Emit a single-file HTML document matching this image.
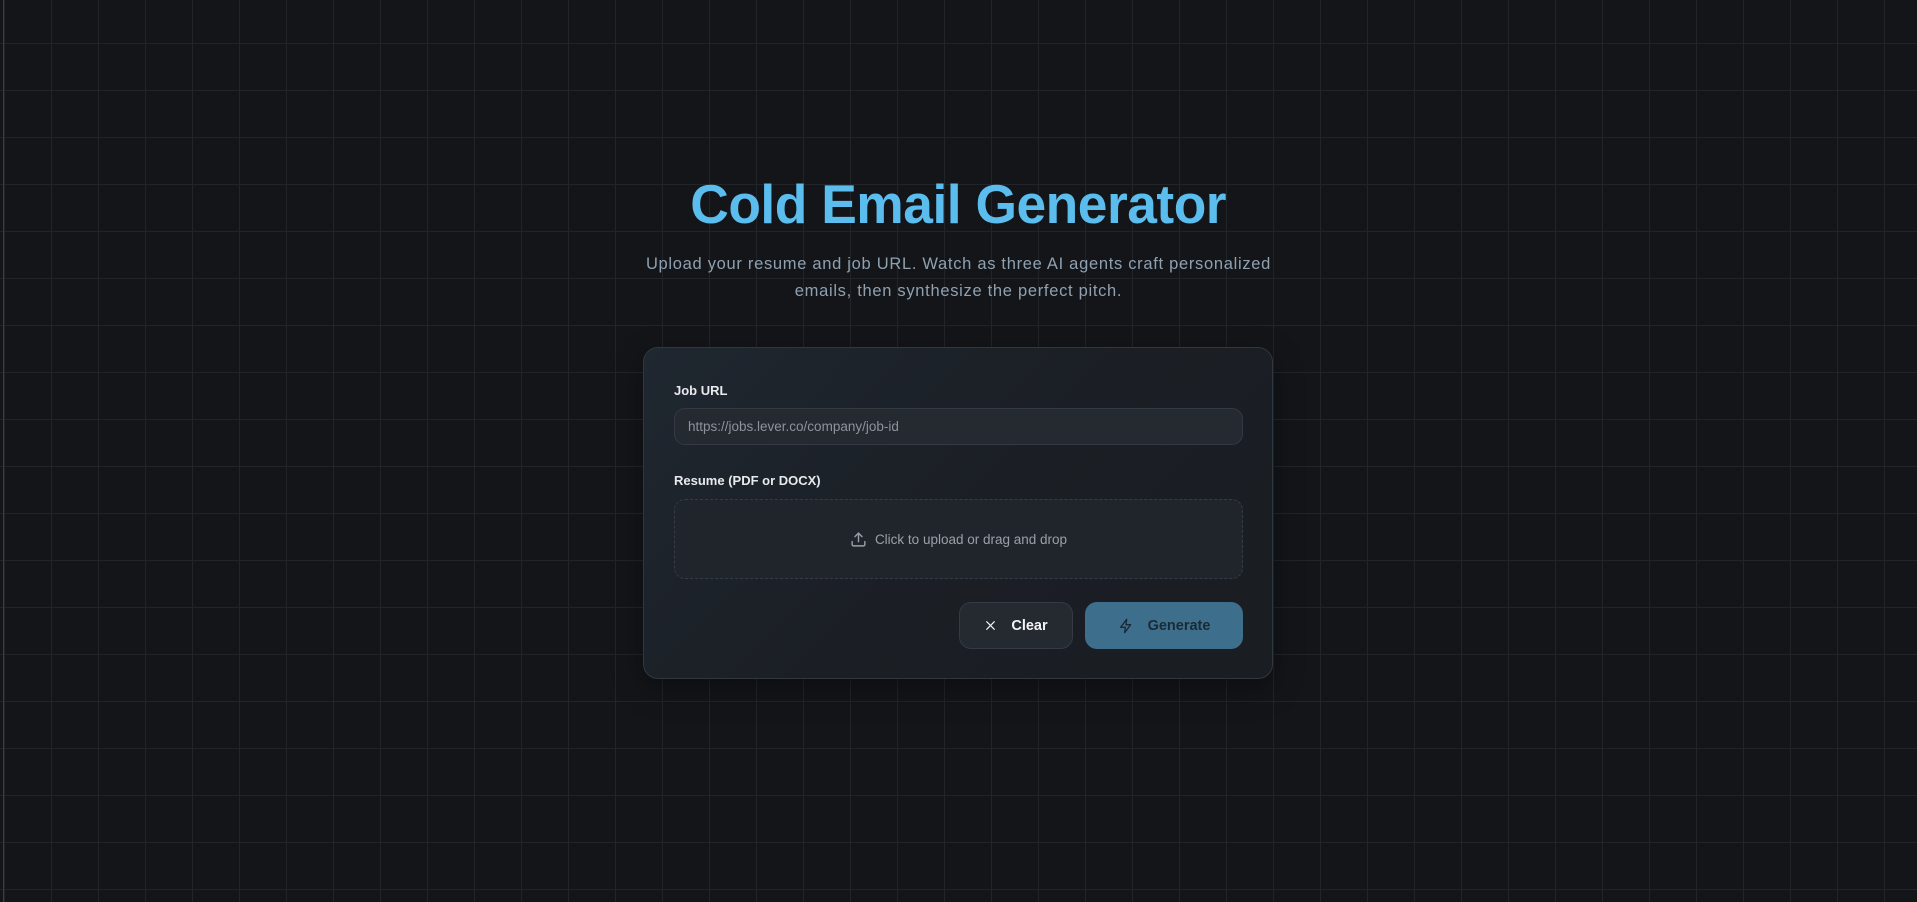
<!DOCTYPE html>
<html><head><meta charset="utf-8"><style>
*{box-sizing:border-box;margin:0;padding:0}
html,body{width:1917px;height:902px;overflow:hidden}
body{background-color:#131519;font-family:"Liberation Sans",sans-serif;position:relative;
background-image:linear-gradient(to right,#212429 1px,transparent 1px),linear-gradient(to bottom,#212429 1px,transparent 1px);
background-size:47px 47px;background-position:4px 43px}
.lb{position:absolute;left:3px;top:0;width:1px;height:902px;background:#3a3d42}
h1{position:absolute;left:0;width:1917px;top:172px;text-align:center;font-size:55px;line-height:64px;font-weight:bold;color:#5bbdee}
h1 span{display:inline-block;transform:scaleX(0.97);letter-spacing:-0.5px}
.sub{position:absolute;left:636px;width:645px;top:251px;text-align:center;font-size:16.5px;line-height:27px;color:#8fa1b1;letter-spacing:0.7px}
.card{position:absolute;left:643px;top:347px;width:630px;height:332px;border-radius:15px;border:1px solid #30373f;
background:linear-gradient(135deg,#1f2730 0%,#1b1f25 50%,#1a1d22 100%);box-shadow:0 10px 30px rgba(0,0,0,.35)}
.lab{position:absolute;left:30px;font-size:13px;font-weight:bold;color:#e8eaed}
.inp{position:absolute;left:30px;top:60px;width:569px;height:37px;border-radius:11px;background:#252a31;border:1px solid #333a43;
font-size:13.5px;color:#8d939b;padding-left:13px;line-height:35px}
.drop{position:absolute;left:30px;top:151px;width:569px;height:80px;border-radius:11px;background:#20252b;border:1px dashed #353c45;
display:flex;align-items:center;justify-content:center;font-size:13.5px;color:#9aa0a8}
.drop svg{margin-right:8px}
.btn{position:absolute;top:254px;height:47px;border-radius:12px;display:flex;align-items:center;justify-content:center;font-size:14.5px;font-weight:bold}
.clear{left:315px;width:114px;background:#252a31;border:1px solid #343b44;color:#f2f3f5}
.gen{left:441px;width:158px;background:#3d6f8c;color:#1b2a35}
.btn svg{margin-right:14px}
</style></head><body>
<div class="lb"></div>
<h1><span>Cold Email Generator</span></h1>
<div class="sub">Upload your resume and job URL. Watch as three AI agents craft personalized<br>emails, then synthesize the perfect pitch.</div>
<div class="card">
<div class="lab" style="top:35px">Job URL</div>
<div class="inp">https://jobs.lever.co/company/job-id</div>
<div class="lab" style="top:125px">Resume (PDF or DOCX)</div>
<div class="drop"><svg width="17" height="17" viewBox="0 0 24 24" fill="none" stroke="#9aa0a8" stroke-width="2" stroke-linecap="round" stroke-linejoin="round"><path d="M12 15V3"/><path d="M7 8l5-5 5 5"/><path d="M3 15v4a2 2 0 0 0 2 2h14a2 2 0 0 0 2-2v-4"/></svg>Click to upload or drag and drop</div>
<div class="btn clear"><svg width="13" height="13" viewBox="0 0 24 24" fill="none" stroke="#f2f3f5" stroke-width="2.2" stroke-linecap="round"><path d="M5 5l14 14M19 5L5 19"/></svg>Clear</div>
<div class="btn gen"><svg width="16" height="16" viewBox="0 0 24 24" fill="none" stroke="#1b2a35" stroke-width="2" stroke-linejoin="round"><path d="M13 2L4 14h7l-1 8 9-12h-7z"/></svg>Generate</div>
</div>
</body></html>
